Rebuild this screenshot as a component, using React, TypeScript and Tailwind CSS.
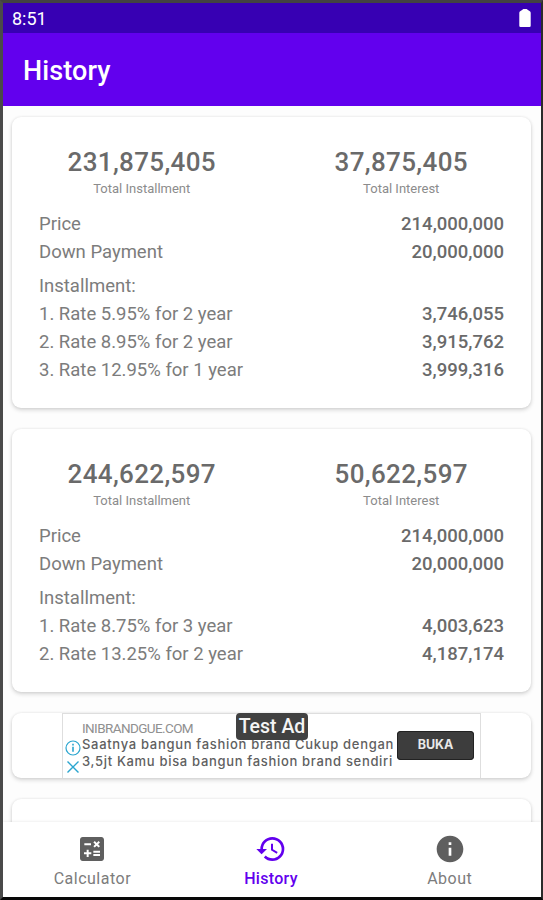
import clsx from "clsx";
import type { IconType } from "react-icons";
import { MdCalculate, MdHistory, MdInfo } from "react-icons/md";

interface Rate {
  label: string;
  amount: string;
}

interface HistoryItem {
  installment: string;
  interest: string;
  price: string;
  downPayment: string;
  rates: Rate[];
}

const items: HistoryItem[] = [
  {
    installment: "231,875,405",
    interest: "37,875,405",
    price: "214,000,000",
    downPayment: "20,000,000",
    rates: [
      { label: "1. Rate 5.95% for 2 year", amount: "3,746,055" },
      { label: "2. Rate 8.95% for 2 year", amount: "3,915,762" },
      { label: "3. Rate 12.95% for 1 year", amount: "3,999,316" },
    ],
  },
  {
    installment: "244,622,597",
    interest: "50,622,597",
    price: "214,000,000",
    downPayment: "20,000,000",
    rates: [
      { label: "1. Rate 8.75% for 3 year", amount: "4,003,623" },
      { label: "2. Rate 13.25% for 2 year", amount: "4,187,174" },
    ],
  },
];

const tabs: { label: string; icon: IconType }[] = [
  { label: "Calculator", icon: MdCalculate },
  { label: "History", icon: MdHistory },
  { label: "About", icon: MdInfo },
];

const cardStyle =
  "shrink-0 rounded-[9px] bg-white shadow-[0_2px_4px_rgba(0,0,0,0.16),0_0_3px_rgba(0,0,0,0.08)]";

function Total({ value, label }: { value: string; label: string }) {
  return (
    <div className="flex flex-1 flex-col items-center">
      <span className="h-[34px] text-[26px] leading-[34px] font-medium tracking-[0.35px] text-[#6a6a6a]">
        {value}
      </span>
      <span className="h-[19px] text-[13px] leading-[19px] text-[#8c8c8c]">{label}</span>
    </div>
  );
}

function Row({ label, value }: { label: string; value?: string }) {
  return (
    <div className="flex h-7 items-center justify-between text-[18.5px] text-[#7c7c7c]">
      <span>{label}</span>
      {value && <span className="font-medium text-[#6a6a6a]">{value}</span>}
    </div>
  );
}

function HistoryCard({ item }: { item: HistoryItem }) {
  return (
    <div className={clsx(cardStyle, "pt-7 pb-[23px]")}>
      <div className="flex">
        <Total value={item.installment} label="Total Installment" />
        <Total value={item.interest} label="Total Interest" />
      </div>
      <div className="mt-[13px] px-[27px]">
        <Row label="Price" value={item.price} />
        <Row label="Down Payment" value={item.downPayment} />
        <div className="mt-1.5">
          <Row label="Installment:" />
          {item.rates.map((rate) => (
            <Row key={rate.label} label={rate.label} value={rate.amount} />
          ))}
        </div>
      </div>
    </div>
  );
}

function AdBanner() {
  return (
    <div className={clsx(cardStyle, "flex h-[65px] justify-center")}>
      <div className="relative flex w-[419px] border border-b-0 border-[#dedede] font-['Inter',sans-serif]">
        {/* Ad choices */}
        <div className="flex w-[19px] shrink-0 flex-col items-center gap-[5px] pt-[26px] pl-px text-[#2aa5cf]">
          <svg width="16" height="16" viewBox="0 0 16 16" fill="none" stroke="currentColor">
            <circle cx="8" cy="8" r="7" strokeWidth="1.2" />
            <path d="M8 6.8v5M8 3.8v1.7" strokeWidth="1.6" />
          </svg>
          <svg width="12" height="12" viewBox="0 0 12 12" fill="none" stroke="currentColor">
            <path d="M.5 .5l11 11M11.5 .5l-11 11" strokeWidth="1.4" />
          </svg>
        </div>
        <div className="shrink-0 pt-[6px] whitespace-nowrap">
          <p className="font-['Roboto',sans-serif] text-[13.5px] leading-4 tracking-[-0.6px] text-[#909090]">
            INIBRANDGUE.COM
          </p>
          <p className="text-[13px] leading-[17px] font-medium tracking-[0.69px] text-[#5f5f5f]">
            Saatnya bangun fashion brand Cukup dengan
          </p>
          <p className="text-[13px] leading-[17px] font-medium tracking-[0.68px] text-[#5f5f5f]">
            3,5jt Kamu bisa bangun fashion brand sendiri
          </p>
        </div>
        <button className="absolute top-[17px] right-[6px] h-[29px] w-[77px] rounded bg-[#3d3d3d] text-[12.5px] font-bold text-[#e8e8e8] shadow-[inset_0_0_0_1px_#222]">
          BUKA
        </button>
        <span className="absolute -top-px left-[173px] flex h-[27px] w-[72px] items-center justify-center rounded-[4px] bg-[#414141] font-['Roboto',sans-serif] text-[19.5px] font-medium whitespace-nowrap text-[#f4f4f4]">
          Test Ad
        </span>
      </div>
    </div>
  );
}

export default function App() {
  return (
    <div className="flex h-[900px] w-[543px] flex-col overflow-hidden border-t-[3px] border-r-2 border-b-[3px] border-l-[3px] border-t-[#424242] border-r-[#2b2b2b] border-b-[#080808] border-l-[#4a4a4a] bg-[#fdfdfd] font-['Roboto',sans-serif]">
      {/* Status bar */}
      <div className="flex h-[30px] shrink-0 items-center justify-between bg-[#3700b3] pr-[10px] pl-[9px] text-white">
        <span className="text-[18px]">8:51</span>
        <svg width="12" height="18" viewBox="0 0 12 18" fill="currentColor">
          <path d="M4.5 0h3q.8 0 1 .8l2 1.2q1.2.7 1.2 1.8v13q0 1.2-1.2 1.2h-9Q.3 18 .3 16.8v-13Q.3 2.7 1.5 2l2-1.2q.2-.8 1-.8z" />
        </svg>
      </div>

      {/* App bar */}
      <header className="flex h-[73px] shrink-0 items-center bg-[#6200ee] pt-[4px] pl-5 text-white">
        <h1 className="text-[27px] font-medium tracking-[0.1px]">History</h1>
      </header>

      <main className="flex min-h-0 flex-1 flex-col gap-[21px] overflow-hidden pt-[11px] pr-[10px] pl-[9px]">
        {items.map((item) => (
          <HistoryCard key={item.installment} item={item} />
        ))}
        <AdBanner />
        <div className={clsx(cardStyle, "h-20")} />
      </main>

      {/* Bottom navigation */}
      <nav className="z-10 flex h-[75px] shrink-0 bg-white pr-[2px] shadow-[0_-1px_2px_rgba(0,0,0,0.06)]">
        {tabs.map(({ label, icon: Icon }) => (
          <div
            key={label}
            className={clsx(
              "flex flex-1 flex-col items-center pt-[11px]",
              label === "History" ? "text-[#6200ee]" : "text-[#5f5f5f]"
            )}
          >
            <Icon size={32} />
            <span
              className={clsx(
                "mt-1 text-[16px] leading-5",
                label === "History"
                  ? "font-medium tracking-[0.3px]"
                  : "tracking-[0.5px] text-[#7c7c7c]"
              )}
            >
              {label}
            </span>
          </div>
        ))}
      </nav>
    </div>
  );
}
